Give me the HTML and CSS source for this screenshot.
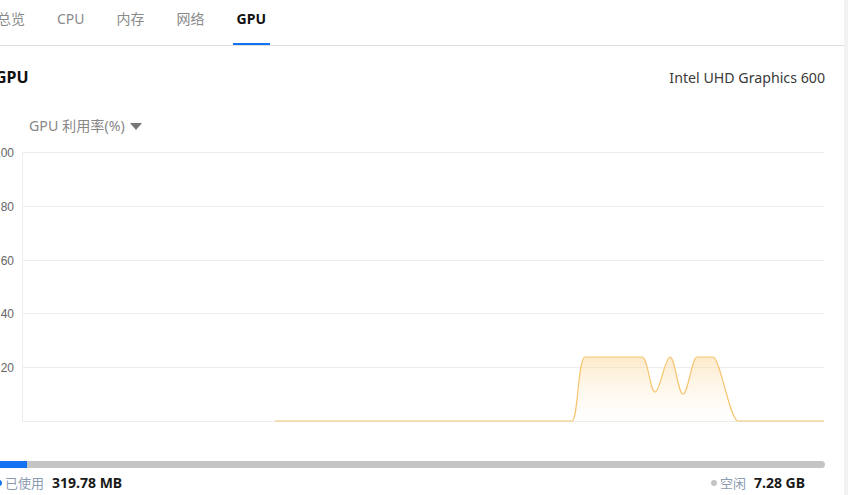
FILE: index.html
```html
<!DOCTYPE html>
<html lang="zh">
<head>
<meta charset="utf-8">
<link rel="stylesheet" href="styles.css">
</head>
<body>
<div class="app">
  <div class="main">
    <nav class="tabs">
      <div class="tab">总览</div>
      <div class="tab">CPU</div>
      <div class="tab">内存</div>
      <div class="tab">网络</div>
      <div class="tab active">GPU</div>
    </nav>
    <div class="content">
      <div class="header">
        <div class="title">GPU</div>
        <div class="model">Intel UHD Graphics 600</div>
      </div>
      <div class="chart-title">GPU 利用率(%) <span class="caret"></span></div>
      <svg class="chart" width="825" height="295" viewBox="0 0 825 295">
        <defs>
          <linearGradient id="fillg" x1="0" y1="0" x2="0" y2="1">
            <stop offset="0" stop-color="#fbd9a0" stop-opacity="0.55"/>
            <stop offset="1" stop-color="#fff3e0" stop-opacity="0.05"/>
          </linearGradient>
        </defs>
        <g stroke="#ececec" stroke-width="1">
          <line x1="22" y1="17.5" x2="824" y2="17.5"/>
          <line x1="22" y1="71.5" x2="824" y2="71.5"/>
          <line x1="22" y1="125.5" x2="824" y2="125.5"/>
          <line x1="22" y1="178.5" x2="824" y2="178.5"/>
          <line x1="22" y1="232.5" x2="824" y2="232.5"/>
          <line x1="22" y1="286.5" x2="824" y2="286.5"/>
          <line x1="22.5" y1="17" x2="22.5" y2="287"/>
        </g>
        <g class="ticks" text-anchor="end">
          <text x="14" y="21.5">100</text>
          <text x="14" y="75.5">80</text>
          <text x="14" y="129.5">60</text>
          <text x="14" y="182.5">40</text>
          <text x="14" y="236.5">20</text>
        </g>
        <path d="M572,286 C578,286 578,222 585,222 L642,222 C648,222 650,257 655,257 C660,257 665,222 670,222 C675,222 678,259 683,259 C688,259 692,222 697,222 L713,222 C720,222 730,286 738,286 Z" fill="url(#fillg)"/>
        <path d="M275,286 L572,286 C578,286 578,222 585,222 L642,222 C648,222 650,257 655,257 C660,257 665,222 670,222 C675,222 678,259 683,259 C688,259 692,222 697,222 L713,222 C720,222 730,286 738,286 L824,286" fill="none" stroke="#f6c570" stroke-width="1.2"/>
      </svg>
      <div class="bar"><div class="bar-used" style="width:27px"></div></div>
      <div class="legend">
        <div class="legend-item">
          <span class="dot dot-used"></span><span class="label">已使用</span><span class="value">319.78 MB</span>
        </div>
        <div class="legend-item">
          <span class="dot dot-free"></span><span class="label">空闲</span><span class="value">7.28 GB</span>
        </div>
      </div>
    </div>
  </div>
  <div class="strip"></div>
</div>
</body>
</html>
```

FILE: styles.css
```css
* { box-sizing: border-box; }
html, body { margin: 0; padding: 0; background: #fff; }
body {
  font-family: "Noto Sans", "Noto Sans CJK SC", sans-serif;
  color: #222;
}
.app {
  display: flex;
  width: 848px;
  height: 495px;
  overflow: hidden;
}
.main {
  flex: 1;
  overflow: hidden;
  background: #fff;
}
.strip {
  width: 4px;
  background: #f2f2f2;
}
.tabs {
  display: flex;
  gap: 24px;
  margin-left: -7px;
  height: 46px;
  border-bottom: 1px solid #dedede;
}
.tab {
  height: 45px;
  padding: 9px 4px 0;
  font-size: 14px;
  line-height: 20px;
  color: #8a8a8a;
  border-bottom: 2px solid transparent;
}
.tab.active {
  color: #111;
  font-weight: 700;
  border-bottom-color: #1473f5;
}
.content {
  padding-right: 19px;
}
.header {
  display: flex;
  justify-content: space-between;
  align-items: center;
  margin-top: 19px;
  margin-left: -5px;
  height: 24px;
}
.title {
  font-size: 16px;
  font-weight: 700;
  color: #111;
}
.model {
  font-size: 14.2px;
  color: #3a3a3a;
}
.chart-title {
  margin-top: 28px;
  padding-left: 29px;
  height: 18px;
  line-height: 18px;
  font-size: 14.2px;
  color: #888;
  display: flex;
  align-items: center;
  gap: 5px;
}
.caret {
  display: inline-block;
  width: 0;
  height: 0;
  border-left: 6px solid transparent;
  border-right: 6px solid transparent;
  border-top: 7px solid #777;
}
.chart {
  display: block;
}
.ticks text {
  font-family: "Liberation Sans", "Noto Sans", sans-serif;
  font-size: 12px;
  fill: #666;
}
.bar {
  margin-top: 31px;
  height: 7px;
  width: 830px;
  margin-left: -5px;
  background: #c4c4c4;
  border-radius: 0 4px 4px 0;
  overflow: hidden;
  display: flex;
}
.bar-used {
  height: 100%;
  background: #1473f5;
  margin-left: 5px;
}
.legend {
  display: flex;
  justify-content: space-between;
  margin-top: 6px;
  margin-left: -4px;
  padding-right: 20px;
  height: 18px;
  line-height: 18px;
}
.legend-item {
  display: flex;
  align-items: center;
}
.dot {
  width: 6px;
  height: 6px;
  border-radius: 50%;
  margin-right: 3px;
}
.dot-used { background: #1473f5; }
.dot-free { background: #c4c4c4; }
.label {
  font-size: 13px;
  color: #8d9bb0;
  margin-right: 8px;
}
.value {
  font-size: 14px;
  font-weight: 700;
  color: #1a1a1a;
}
```
